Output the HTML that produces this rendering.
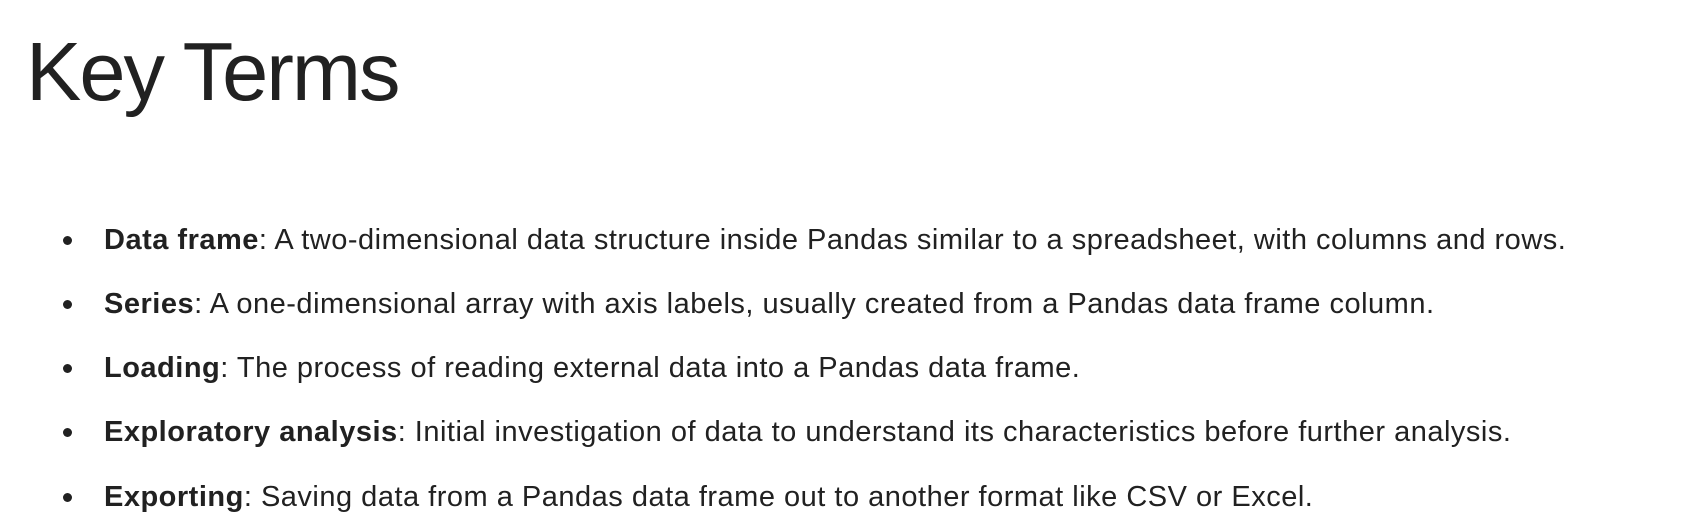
<!DOCTYPE html>
<html><head><meta charset="utf-8"><style>
html,body{margin:0;padding:0;background:#fff;width:1694px;height:526px;overflow:hidden}
body{font-family:"Liberation Sans",sans-serif;color:#212121}
h1{position:absolute;left:26px;top:22px;margin:0;font-weight:normal;font-size:83px;line-height:100px;letter-spacing:-2px}
ul{position:absolute;left:0;top:220px;margin:0;padding:0;list-style:none}
li{position:absolute;left:104px;white-space:nowrap;font-size:29px;line-height:40px;letter-spacing:0.5px}
li::before{content:"";position:absolute;left:-41px;top:16px;width:9px;height:9px;border-radius:50%;background:#212121}
</style></head><body>
<h1>Key Terms</h1>
<ul>
<li style="top:0"><b>Data frame</b>: A two-dimensional data structure inside Pandas similar to a spreadsheet, with columns and rows.</li>
<li style="top:64px"><b>Series</b>: A one-dimensional array with axis labels, usually created from a Pandas data frame column.</li>
<li style="top:128px"><b>Loading</b>: The process of reading external data into a Pandas data frame.</li>
<li style="top:192px"><b>Exploratory analysis</b>: Initial investigation of data to understand its characteristics before further analysis.</li>
<li style="top:257px"><b>Exporting</b>: Saving data from a Pandas data frame out to another format like CSV or Excel.</li>
</ul>
</body></html>
